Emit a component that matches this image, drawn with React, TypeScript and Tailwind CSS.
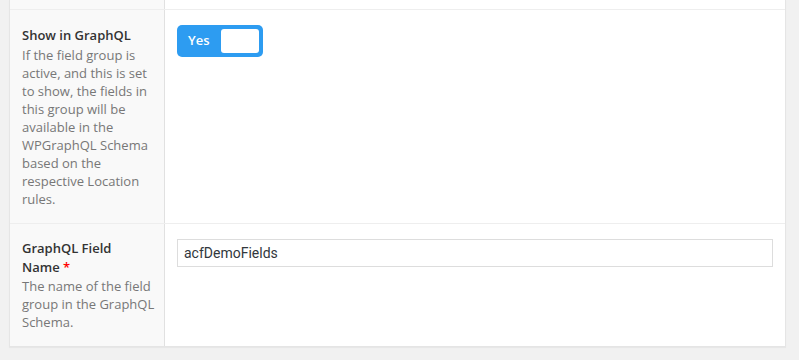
import React, { useState } from 'react';

const font = { fontFamily: '"Open Sans", "Noto Sans", Arial, sans-serif' };

export default function App() {
  const [show, setShow] = useState(true);
  const [name, setName] = useState('acfDemoFields');

  return (
    <div className="w-[799px] h-[360px] bg-[#f1f1f1] overflow-hidden" style={font}>
      <div className="ml-[9px] mr-[13px] bg-white border border-t-0 border-[#e5e5e5] shadow-[0_1px_1px_rgba(0,0,0,0.04)]">
        {/* tail of previous row */}
        <div className="flex h-[10px] border-b border-[#eeeeee]">
          <div className="w-[155px] bg-[#f9f9f9] border-r border-[#e1e1e1]" />
          <div className="flex-1" />
        </div>

        {/* Show in GraphQL */}
        <div className="flex border-b border-[#eeeeee]">
          <div className="w-[155px] shrink-0 bg-[#f9f9f9] border-r border-[#e1e1e1] px-3 pt-[15px] pb-[15px]">
            <div className="text-[13px] leading-5 font-semibold text-[#333]">Show in GraphQL</div>
            <p className="mt-px text-[13px] leading-[18px] text-[#777]">
              If the field group is active, and this is set to show, the fields in this group will be available in the WPGraphQL Schema based on the respective Location rules.
            </p>
          </div>
          <div className="flex-1 px-3 pt-[15px]">
            <button
              onClick={() => setShow(!show)}
              className={`flex items-center justify-between w-[86px] h-8 rounded-[5px] pl-[11px] pr-1 ${show ? 'bg-[#2d9cf1]' : 'bg-[#ccc]'}`}
            >
              <span className="text-[13px] font-semibold text-white">{show ? 'Yes' : 'No'}</span>
              <span className="w-[38px] h-6 rounded-[3px] bg-white" />
            </button>
          </div>
        </div>

        {/* GraphQL Field Name */}
        <div className="flex">
          <div className="w-[155px] shrink-0 bg-[#f9f9f9] border-r border-[#e1e1e1] pl-3 pr-2 pt-[15px] pb-[15px]">
            <div className="text-[13px] leading-[19px] font-semibold text-[#333] pr-1">
              GraphQL Field{' '}
              <span className="inline-block">
                Name <span className="text-[#f00]">*</span>
              </span>
            </div>
            <p className="text-[13px] leading-[18px] text-[#777]">
              The name of the field group in the GraphQL Schema.
            </p>
          </div>
          <div className="flex-1 px-3 pt-[15px]">
            <input
              value={name}
              onChange={(e) => setName(e.target.value)}
              className="w-full h-7 px-[6px] border border-[#dddddd] text-[14px] text-[#32373c] outline-none"
              style={{ fontFamily: 'Roboto, Inter, Arial, sans-serif' }}
            />
          </div>
        </div>
      </div>
    </div>
  );
}
